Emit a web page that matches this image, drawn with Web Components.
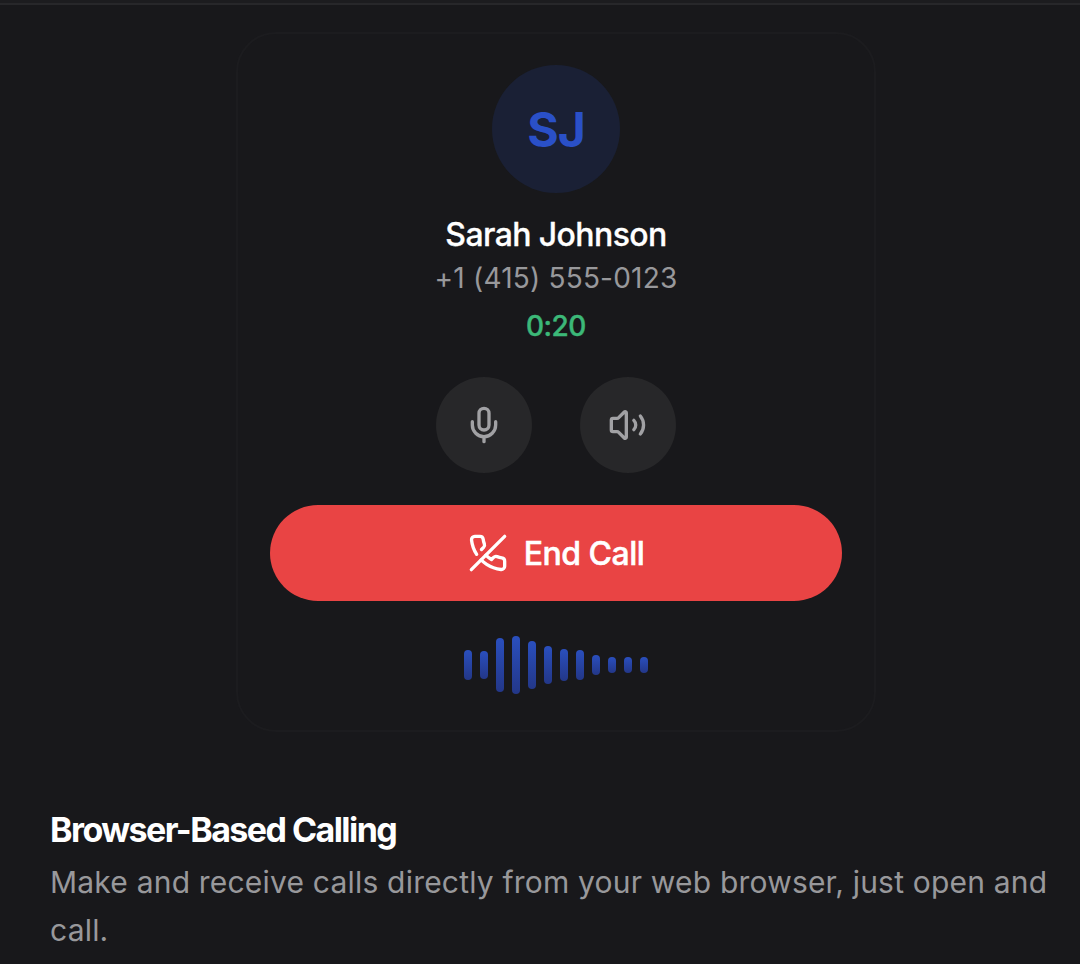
<!DOCTYPE html>
<html lang="en">
<head>
<meta charset="utf-8">
<title>Browser-Based Calling</title>
<style>
  html, body { margin: 0; background: #18181b; }
  body { font-family: Inter, "Liberation Sans", sans-serif; color: #fff; overflow: hidden; }
</style>
</head>
<body>
<feature-panel>
  <call-card slot="demo" initials="SJ" name="Sarah Johnson" phone="+1 (415) 555-0123" timer="0:20">
    <round-button slot="controls">
      <svg viewBox="0 0 24 24"><path d="M12 2a3 3 0 0 0-3 3v7a3 3 0 0 0 6 0V5a3 3 0 0 0-3-3Z"/><path d="M19 10v2a7 7 0 0 1-14 0v-2"/><line x1="12" x2="12" y1="19" y2="22"/></svg>
    </round-button>
    <round-button slot="controls">
      <svg viewBox="0 0 24 24"><path d="M11 4.702a.705.705 0 0 0-1.203-.498L6.413 7.587A1.4 1.4 0 0 1 5.416 8H3a1 1 0 0 0-1 1v6a1 1 0 0 0 1 1h2.416a1.4 1.4 0 0 1 .997.413l3.383 3.384A.705.705 0 0 0 11 19.298z"/><path d="M15.5 9.2a4 4 0 0 1 0 5.6"/><path d="M19.4 6.6a8.5 8.5 0 0 1 0 10.8"/></svg>
    </round-button>
    <end-call slot="action">End Call</end-call>
    <voice-wave slot="wave"></voice-wave>
  </call-card>
  <span slot="title">Browser-Based Calling</span>
  <span slot="text">Make and receive calls directly from your web browser, just open and call.</span>
</feature-panel>

<script>
class FeaturePanel extends HTMLElement {
  connectedCallback() {
    this.attachShadow({ mode: 'open' });
    this.shadowRoot.innerHTML = `
      <style>
        :host {
          display: block;
          height: 964px;
          box-sizing: border-box;
          background: #18181b;
        }
        .top {
          height: 3px;
          background: #1c1c1f;
          border-bottom: 2px solid #27272a;
        }
        .body {
          padding: 27px 18px 0 50px;
        }
        .demo {
          display: flex;
          justify-content: center;
        }
        h3 {
          margin: 74px 0 0;
          font-size: 34px;
          line-height: 48px;
          font-weight: 700;
          letter-spacing: -1.55px;
          color: #fff;
        }
        p {
          margin: 4px 0 0;
          font-size: 30px;
          line-height: 48px;
          letter-spacing: 0.2px;
          color: #98989b;
        }
      </style>
      <div class="top"></div>
      <div class="body">
        <div class="demo"><slot name="demo"></slot></div>
        <h3><slot name="title"></slot></h3>
        <p><slot name="text"></slot></p>
      </div>
    `;
  }
}

class CallCard extends HTMLElement {
  connectedCallback() {
    this.attachShadow({ mode: 'open' });
    this.shadowRoot.innerHTML = `
      <style>
        :host {
          display: flex;
          flex-direction: column;
          align-items: center;
          box-sizing: border-box;
          width: 640px;
          height: 700px;
          padding: 31px 32px 32px;
          border: 2px solid #1c1c1f;
          border-radius: 40px;
          background: #18181b;
        }
        .avatar {
          width: 128px;
          height: 128px;
          border-radius: 50%;
          background: #1a2035;
          color: #2a50c8;
          font-size: 48px;
          font-weight: 700;
          letter-spacing: -1px;
          display: flex;
          align-items: center;
          justify-content: center;
        }
        .name {
          margin-top: 22px;
          font-size: 32px;
          line-height: 40px;
          font-weight: 500;
          letter-spacing: -0.6px;
          -webkit-text-stroke: 0.3px #fff;
          color: #fff;
        }
        .phone {
          margin-top: 3px;
          font-size: 28px;
          line-height: 40px;
          letter-spacing: 0.2px;
          color: #98989b;
        }
        .timer {
          margin-top: 8px;
          font-size: 28px;
          line-height: 40px;
          font-weight: 500;
          letter-spacing: -0.5px;
          -webkit-text-stroke: 0.4px #3cb878;
          color: #3cb878;
        }
        .controls {
          display: flex;
          gap: 48px;
          margin-top: 31px;
        }
        .action {
          align-self: stretch;
          margin-top: 32px;
        }
        .wave {
          margin-top: 32px;
        }
      </style>
      <div class="avatar">${this.getAttribute('initials')}</div>
      <div class="name">${this.getAttribute('name')}</div>
      <div class="phone">${this.getAttribute('phone')}</div>
      <div class="timer">${this.getAttribute('timer')}</div>
      <div class="controls"><slot name="controls"></slot></div>
      <div class="action"><slot name="action"></slot></div>
      <div class="wave"><slot name="wave"></slot></div>
    `;
  }
}

class RoundButton extends HTMLElement {
  connectedCallback() {
    this.attachShadow({ mode: 'open' });
    this.shadowRoot.innerHTML = `
      <style>
        :host {
          display: flex;
          align-items: center;
          justify-content: center;
          width: 96px;
          height: 96px;
          border-radius: 50%;
          background: #272729;
        }
        ::slotted(svg) {
          width: 40px;
          height: 40px;
          fill: none;
          stroke: #a1a1a4;
          stroke-width: 2;
          stroke-linecap: round;
          stroke-linejoin: round;
        }
      </style>
      <slot></slot>
    `;
  }
}

class EndCall extends HTMLElement {
  connectedCallback() {
    this.attachShadow({ mode: 'open' });
    this.shadowRoot.innerHTML = `
      <style>
        :host {
          display: flex;
          align-items: center;
          justify-content: center;
          gap: 16px;
          height: 96px;
          border-radius: 48px;
          background: #e94444;
          color: #fff;
          font-size: 32px;
          font-weight: 500;
          letter-spacing: -0.5px;
          -webkit-text-stroke: 0.5px #fff;
        }
        svg {
          width: 40px;
          height: 40px;
          fill: none;
          stroke: #fff;
          stroke-width: 2;
          stroke-linecap: round;
          stroke-linejoin: round;
        }
      </style>
      <svg viewBox="0 0 24 24">
        <path d="M10.68 13.31a16 16 0 0 0 3.41 2.6l1.27-1.27a2 2 0 0 1 2.11-.45 12.84 12.84 0 0 0 2.81.7 2 2 0 0 1 1.72 2v3a2 2 0 0 1-2.18 2 19.79 19.79 0 0 1-8.63-3.07 19.42 19.42 0 0 1-3.33-2.67m-2.67-3.34a19.79 19.79 0 0 1-3.07-8.63A2 2 0 0 1 4.11 2h3a2 2 0 0 1 2 1.72 12.84 12.84 0 0 0 .7 2.81 2 2 0 0 1-.45 2.11L8.09 9.91"/>
        <line x1="22" x2="2" y1="2" y2="22"/>
      </svg>
      <span><slot></slot></span>
    `;
  }
}

class VoiceWave extends HTMLElement {
  connectedCallback() {
    this.attachShadow({ mode: 'open' });
    const heights = [30, 28, 54, 58, 48, 38, 32, 30, 20, 16, 16, 16];
    const bars = heights.map(h => `<i style="height:${h}px"></i>`).join('');
    this.shadowRoot.innerHTML = `
      <style>
        :host {
          display: flex;
          align-items: center;
          gap: 8px;
          height: 64px;
        }
        i {
          display: block;
          width: 8px;
          border-radius: 4px;
          background: linear-gradient(to bottom, #2a4fbe, #233788);
        }
      </style>
      ${bars}
    `;
  }
}

customElements.define('feature-panel', FeaturePanel);
customElements.define('call-card', CallCard);
customElements.define('round-button', RoundButton);
customElements.define('end-call', EndCall);
customElements.define('voice-wave', VoiceWave);
</script>
</body>
</html>
